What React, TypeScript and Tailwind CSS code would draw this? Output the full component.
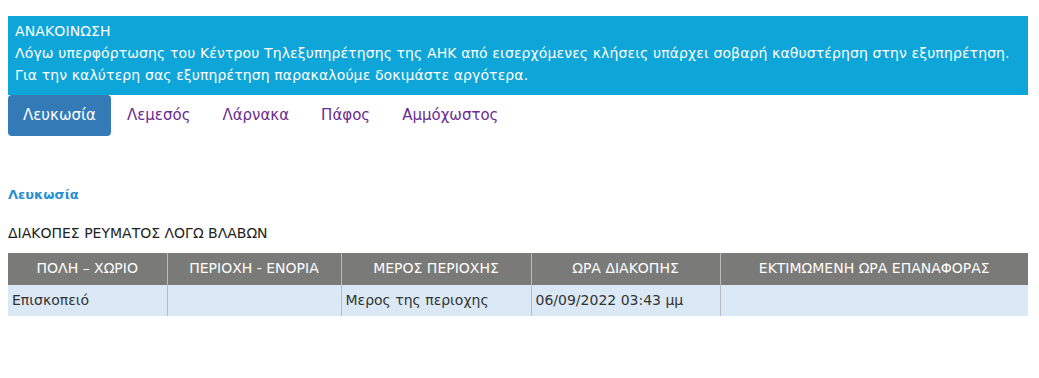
const tabs = ['Λευκωσία', 'Λεμεσός', 'Λάρνακα', 'Πάφος', 'Αμμόχωστος']

const headers = ['ΠΟΛΗ – ΧΩΡΙΟ', 'ΠΕΡΙΟΧΗ - ΕΝΟΡΙΑ', 'ΜΕΡΟΣ ΠΕΡΙΟΧΗΣ', 'ΩΡΑ ΔΙΑΚΟΠΗΣ', 'ΕΚΤΙΜΩΜΕΝΗ ΩΡΑ ΕΠΑΝΑΦΟΡΑΣ']
const row = ['Επισκοπειό', '', 'Μερος της περιοχης', '06/09/2022 03:43 μμ', '']
const widths = ['w-[159px]', 'w-[174px]', 'w-[190px]', 'w-[189px]', 'w-[308px]']

export default function App() {
  return (
    <div className="min-h-[378px] bg-white px-2 pt-4 text-[14px] text-[#333]" style={{ fontFamily: '"DejaVu Sans", sans-serif' }}>
      <div className="h-[79px] w-[1020px] bg-[#0ea5d8] px-[7px] pt-[4px] leading-[22px] tracking-[0.12px] text-white">
        <div>ΑΝΑΚΟΙΝΩΣΗ</div>
        <div>Λόγω υπερφόρτωσης του Κέντρου Τηλεξυπηρέτησης της ΑΗΚ από εισερχόμενες κλήσεις υπάρχει σοβαρή καθυστέρηση στην εξυπηρέτηση.</div>
        <div>Για την καλύτερη σας εξυπηρέτηση παρακαλούμε δοκιμάστε αργότερα.</div>
      </div>

      <ul className="flex h-[41px] text-[15px]">
        {tabs.map((t, i) => (
          <li key={t}>
            <a
              href="#"
              className={
                i === 0
                  ? 'flex h-[41px] items-center rounded bg-[#337ab7] px-[15px] text-white'
                  : 'flex h-[41px] items-center px-[16px] text-[#6a2c91]'
              }
            >
              {t}
            </a>
          </li>
        ))}
      </ul>

      <h4 className="mt-[49px] text-[13px] font-bold text-[#2a8fd0]">Λευκωσία</h4>

      <p className="mt-[18px] text-[#222]">ΔΙΑΚΟΠΕΣ ΡΕΥΜΑΤΟΣ ΛΟΓΩ ΒΛΑΒΩΝ</p>

      <table className="mt-[9px] w-[1020px] border-collapse">
        <thead>
          <tr className="bg-[#7a7a78] text-white">
            {headers.map((h, i) => (
              <th key={h} className={`${widths[i]} h-[32px] border-x border-[#bbb] px-1 text-center font-normal first:border-l-0 last:border-r-0`}>
                {h}
              </th>
            ))}
          </tr>
        </thead>
        <tbody>
          <tr className="bg-[#dae9f5] text-[#333]">
            {row.map((c, i) => (
              <td key={i} className="h-[31px] border-x border-[#bbb] px-[4px] py-0 first:border-l-0 last:border-r-0">
                {c}
              </td>
            ))}
          </tr>
        </tbody>
      </table>
    </div>
  )
}
